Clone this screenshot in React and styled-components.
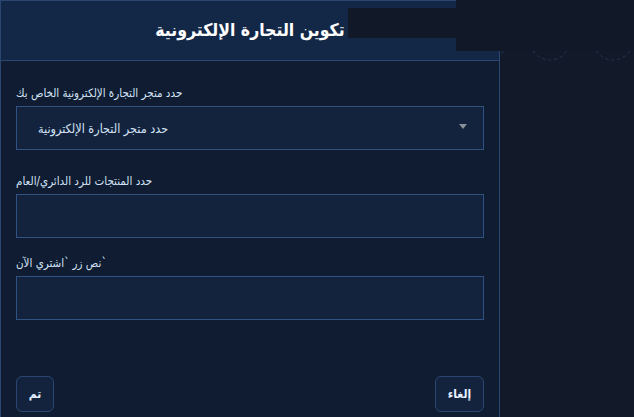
import styled, { createGlobalStyle } from 'styled-components';

const GlobalStyle = createGlobalStyle`
  html, body {
    margin: 0;
    padding: 0;
    background: #121a2a;
    font-family: "DejaVu Sans Condensed", "DejaVu Sans", sans-serif;
  }
`;

const Stage = styled.div`
  position: relative;
  width: 634px;
  height: 417px;
  overflow: hidden;
  background: #121a2a;
`;

const Rings = styled.svg`
  position: absolute;
  top: 0;
  left: 0;
`;

const Panel = styled.div`
  position: relative;
  width: 498px;
  height: 440px;
  border: 1px solid #2b4771;
  background: #0f1c32;
  display: flex;
  flex-direction: column;
`;

const Header = styled.div`
  height: 59px;
  background: #132847;
  border-bottom: 1px solid #2b4771;
  display: flex;
  align-items: center;
  justify-content: center;
`;

const Title = styled.h2`
  margin: 0 0 2px;
  font-size: 17.5px;
  font-weight: 700;
  color: #ffffff;
`;

const Body = styled.div`
  padding: 24px 15px 0;
  display: flex;
  flex-direction: column;
`;

const Field = styled.div`
  display: flex;
  flex-direction: column;
  gap: 4px;
  margin-bottom: ${({ $gap }) => $gap}px;
`;

const Label = styled.label`
  font-size: 11.5px;
  line-height: 17px;
  color: #d4e3f6;
`;

const Box = styled.div`
  height: 42px;
  border: 1px solid #2f5283;
  background: #13233e;
  display: flex;
  align-items: center;
  justify-content: space-between;
  padding: 0 16px 0 21px;
`;

const SelectText = styled.span`
  font-size: 12.5px;
  color: #d4e3f6;
`;

const Caret = styled.span`
  width: 0;
  height: 0;
  border-left: 4px solid transparent;
  border-right: 4px solid transparent;
  border-top: 5px solid #8b8f98;
  margin-top: -4px;
`;

const Footer = styled.div`
  display: flex;
  justify-content: space-between;
  padding: 0 15px;
  margin-top: 56px;
`;

const Button = styled.button`
  height: 36px;
  min-width: ${({ $wide }) => ($wide ? 49 : 38)}px;
  padding: 0 10px;
  border: 1px solid #2b4771;
  border-radius: 6px;
  background: #13233e;
  color: #e6f0ff;
  font-family: inherit;
  font-size: 12px;
  font-weight: 700;
`;

const Mask = styled.div`
  position: absolute;
  background: #111827;
  top: ${({ $top }) => $top}px;
  left: ${({ $left }) => $left}px;
  width: ${({ $w }) => $w}px;
  height: ${({ $h }) => $h}px;
`;

export default function App() {
  return (
    <>
      <GlobalStyle />
      <Stage>
        <Rings width="634" height="100">
          {[487, 550, 613].map((cx) => (
            <circle
              key={cx}
              cx={cx}
              cy="40"
              r="20"
              fill="none"
              stroke="#2a3550"
              strokeWidth="1"
              strokeDasharray="3 3"
            />
          ))}
        </Rings>
        <Panel>
          <Header>
            <Title>تكوين التجارة الإلكترونية</Title>
          </Header>
          <Body>
            <Field $gap={23}>
              <Label>حدد متجر التجارة الإلكترونية الخاص بك</Label>
              <Box>
                <SelectText>حدد متجر التجارة الإلكترونية</SelectText>
                <Caret />
              </Box>
            </Field>
            <Field $gap={17}>
              <Label>حدد المنتجات للرد الدائري/العام</Label>
              <Box />
            </Field>
            <Field $gap={0}>
              <Label>نص زر `اشتري الآن`</Label>
              <Box />
            </Field>
          </Body>
          <Footer>
            <Button>تم</Button>
            <Button $wide>إلغاء</Button>
          </Footer>
        </Panel>
        <Mask $top={8} $left={348} $w={108} $h={30} />
        <Mask $top={0} $left={456} $w={178} $h={51} />
      </Stage>
    </>
  );
}
